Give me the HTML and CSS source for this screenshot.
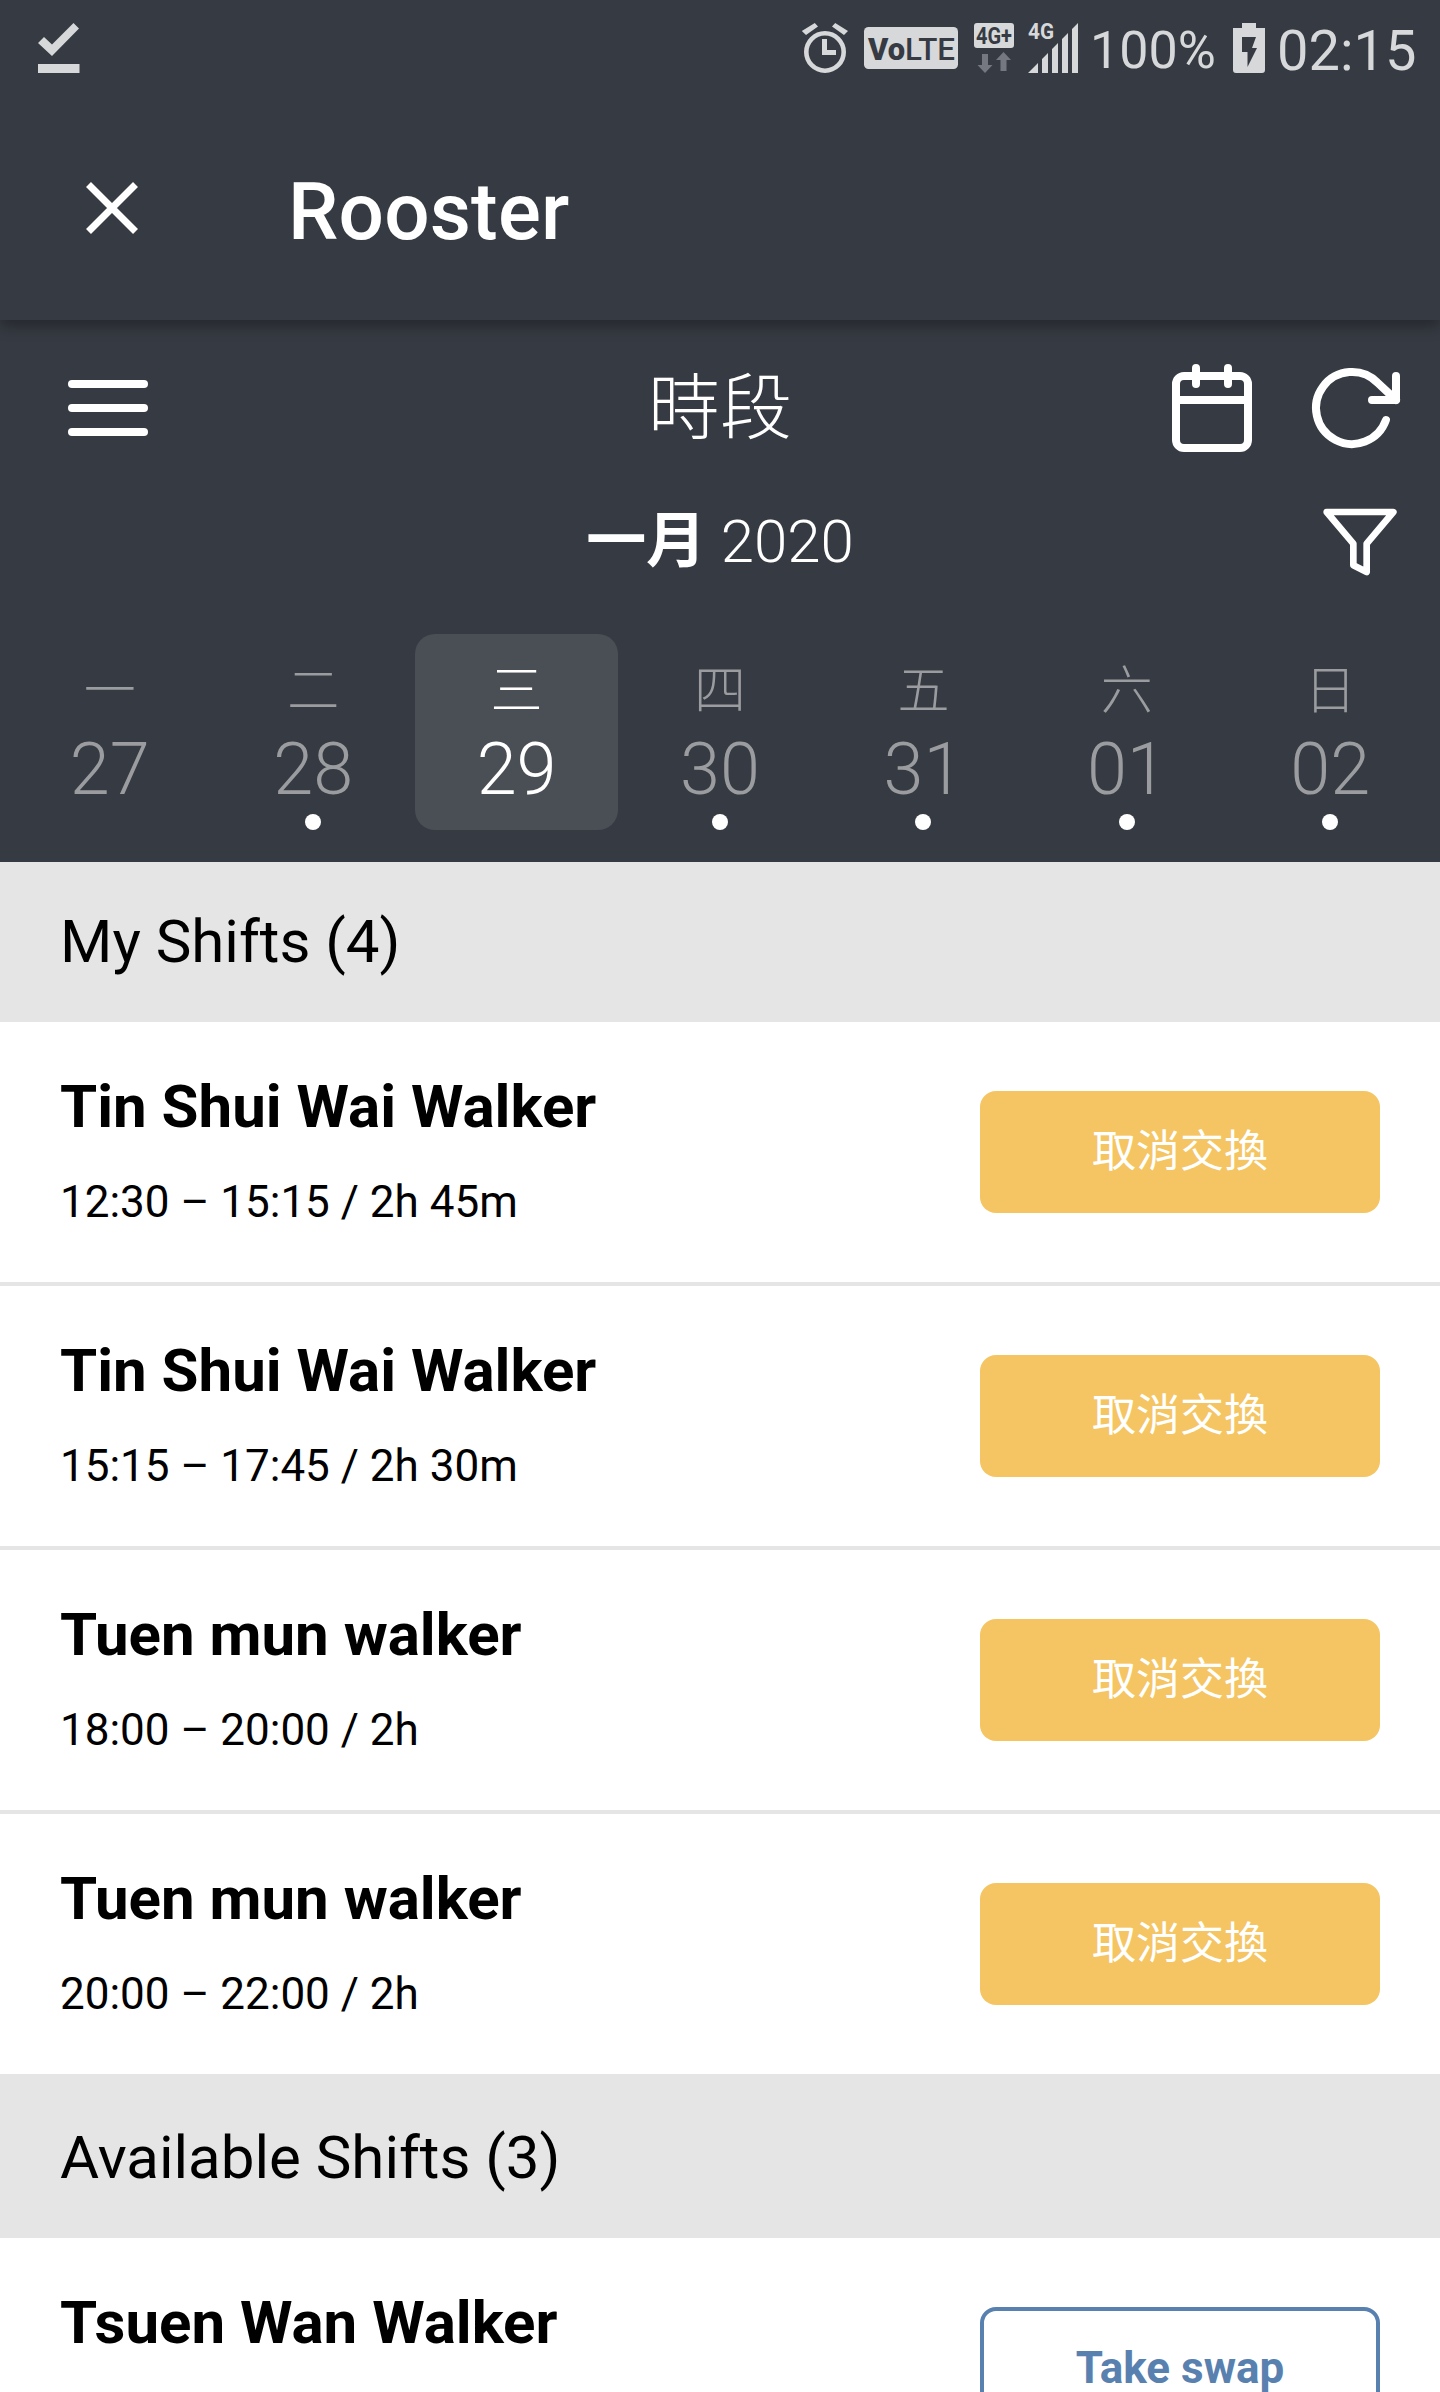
FILE: index.html
```html
<!DOCTYPE html>
<html lang="zh-Hant">
<head>
<meta charset="utf-8">
<title>Rooster</title>
<link rel="stylesheet" href="styles.css">
</head>
<body>
<div class="screen">
  <header class="top">
    <div class="status">
      <svg class="saved" width="42" height="50" viewBox="38 23 42 50"><path d="M38 43l6-6 8 7.500 21.500-21.500 5.500 5.500L52 56z M38 64h41.500v9H38z"/></svg>
      <div class="indicators">
        <svg width="48" height="50" viewBox="801 23 48 50">
          <circle class="ring" cx="825" cy="52" r="18.700"/>
          <path d="M822 39h5v11h9v5h-14z M801.800 31l13-8 3.200 3.500-12 8.500z M848 31l-12.800-8-3.200 3.500 12 8.500z"/>
        </svg>
        <svg class="volte" width="94" height="42" viewBox="864 27 94 42">
          <rect x="864" y="27" width="94" height="42" rx="4.500"/>
          <text class="chip-text heavy" x="868" y="60" textLength="37" lengthAdjust="spacingAndGlyphs" font-size="32">Vo</text>
          <text class="chip-text" x="905" y="60" textLength="50" lengthAdjust="spacingAndGlyphs" font-size="32">LTE</text>
        </svg>
        <svg class="data" width="40" height="50" viewBox="974 23 40 50">
          <rect x="974" y="23" width="40" height="25" rx="3"/>
          <text class="chip-text bold" x="976" y="44" textLength="36" lengthAdjust="spacingAndGlyphs" font-size="23">4G+</text>
          <path class="idle" d="M982 54h6v11h4.500l-7.500 8-7.500-8h4.500z M1000.500 71h6V60h4.500l-7.500-8-7.500 8h4.500z"/>
        </svg>
        <svg class="signal" width="50" height="50" viewBox="1028 23 50 50">
          <text class="bold" x="1028" y="39" textLength="26" lengthAdjust="spacingAndGlyphs" font-size="22">4G</text>
          <path d="M1028 73l10-10v10z M1042 73V59l6-6v20z M1052 73V49l6-6v30z M1062 73V39l6-6v40z M1072 73V29l6-6v50z"/>
        </svg>
        <span class="percent">100%</span>
        <svg class="battery" width="32" height="50" viewBox="1233 23 32 50"><path fill-rule="evenodd" d="M1242 23h14v5h9v42q0 3-3 3h-26q-3 0-3-3V28h9z M1242 37h14l-4 11h5l-9.500 19V52H1242z"/></svg>
        <span class="clock">02:15</span>
      </div>
    </div>
    <div class="appbar">
      <svg class="close" width="52" height="52" viewBox="0 0 52 52"><path d="M2.500 2.500l47 47M49.500 2.500l-47 47"/></svg>
      <h1 class="app-name">Rooster</h1>
    </div>
  </header>

  <section class="planner">
    <div class="toolbar">
      <div class="menu"><i></i><i></i><i></i></div>
      <h2 class="title">時段</h2>
      <div class="tools">
        <svg class="line-icon" width="96" height="96" viewBox="0 0 24 24"><rect x="3" y="4" width="18" height="18" rx="2"/><path d="M16 2v4M8 2v4M3 10h18"/></svg>
        <svg class="line-icon" width="96" height="96" viewBox="0 0 24 24"><path d="M23 4v6h-6"/><path d="M20.490 15a9 9 0 1 1-2.120-9.360L23 10"/></svg>
      </div>
    </div>
    <div class="month-row">
      <div class="month"><b>一月</b> 2020</div>
      <svg class="line-icon" width="80" height="80" viewBox="0 0 24 24"><path d="M22 3H2l8 9.460V19l4 2v-8.540z"/></svg>
    </div>
    <div class="week">
      <div class="day"><span class="weekday">一</span><span class="date">27</span></div>
      <div class="day"><span class="weekday">二</span><span class="date">28</span><i class="dot"></i></div>
      <div class="day selected"><span class="weekday">三</span><span class="date">29</span></div>
      <div class="day"><span class="weekday">四</span><span class="date">30</span><i class="dot"></i></div>
      <div class="day"><span class="weekday">五</span><span class="date">31</span><i class="dot"></i></div>
      <div class="day"><span class="weekday">六</span><span class="date">01</span><i class="dot"></i></div>
      <div class="day"><span class="weekday">日</span><span class="date">02</span><i class="dot"></i></div>
    </div>
  </section>

  <h3 class="group">My Shifts (4)</h3>
  <div class="shift"><div class="info"><div class="place">Tin Shui Wai Walker</div><div class="time">12:30 – 15:15 / 2h 45m</div></div><div class="btn cancel">取消交換</div></div>
  <div class="shift"><div class="info"><div class="place">Tin Shui Wai Walker</div><div class="time">15:15 – 17:45 / 2h 30m</div></div><div class="btn cancel">取消交換</div></div>
  <div class="shift"><div class="info"><div class="place">Tuen mun walker</div><div class="time">18:00 – 20:00 / 2h</div></div><div class="btn cancel">取消交換</div></div>
  <div class="shift"><div class="info"><div class="place">Tuen mun walker</div><div class="time">20:00 – 22:00 / 2h</div></div><div class="btn cancel">取消交換</div></div>
  <h3 class="group">Available Shifts (3)</h3>
  <div class="shift"><div class="info"><div class="place">Tsuen Wan Walker</div></div><div class="btn take">Take swap</div></div>
</div>
</body>
</html>
```

FILE: styles.css
```css
* { box-sizing: border-box; }
body {
  margin: 0;
  font-family: Roboto, "Noto Sans CJK TC", sans-serif;
  color: #000;
  background: #fff;
}
h1, h2, h3 { margin: 0; font-weight: 400; }
svg { display: block; flex: none; overflow: visible; }

.screen {
  width: 1440px;
  height: 2392px;
  overflow: hidden;
}

/* Status bar and app bar */
.top {
  position: relative;
  height: 320px;
  background: #363a42;
  color: #fff;
  box-shadow: 0 6px 14px rgba(0, 0, 0, 0.33);
}
.status {
  display: flex;
  justify-content: space-between;
  height: 100px;
  padding: 23px 0 0 38px;
  color: #d6d8da;
  fill: #d6d8da;
}
.indicators {
  display: flex;
  width: 639px;
  white-space: nowrap;
}
.ring { fill: none; stroke: #d6d8da; stroke-width: 4.6px; }
.volte { margin: 4px 0 0 15px; }
.data { margin-left: 16px; }
.signal { margin-left: 14px; }
.chip-text { fill: #363a42; font-weight: 500; }
.bold { font-weight: 700; }
.heavy { font-weight: 900; }
.idle { fill: #757880; }
.percent {
  width: 143px;
  margin-left: 12px;
  font-size: 52px;
  line-height: 56px;
}
.clock {
  margin-left: 12px;
  font-size: 56px;
  line-height: 56px;
}
.appbar {
  display: flex;
  align-items: flex-start;
  padding: 82px 0 0 86px;
}
.close { stroke: #fff; stroke-width: 7px; }
.app-name {
  margin: -20px 0 0 150px;
  font-size: 80px;
  font-weight: 500;
  letter-spacing: 0.2px;
  line-height: 100px;
}

/* Week planner */
.planner {
  height: 542px;
  padding: 40px 8px 32px;
  background: #363a42;
  color: #fff;
}
.toolbar {
  display: grid;
  grid-template-columns: 1fr auto 1fr;
  align-items: center;
  height: 96px;
}
.menu {
  display: flex;
  flex-direction: column;
  gap: 16px;
  width: 80px;
  margin-left: 60px;
}
.menu i {
  height: 8px;
  border-radius: 4px;
  background: #fff;
}
.title {
  height: 96px;
  font-size: 72px;
  font-weight: 300;
  line-height: 98px;
}
.tools {
  display: flex;
  justify-content: flex-end;
  gap: 44px;
  margin-right: 32px;
}
.line-icon {
  fill: none;
  stroke: #fff;
  stroke-width: 2;
  stroke-linecap: round;
  stroke-linejoin: round;
}
.month-row {
  display: grid;
  grid-template-columns: 80px 1fr 80px;
  height: 80px;
  margin: 46px 32px 52px;
}
.month {
  grid-column: 2;
  text-align: center;
  font-size: 60px;
  font-weight: 300;
  line-height: 80px;
}
.month b { font-weight: 700; }
.week {
  display: grid;
  grid-template-columns: repeat(7, 1fr);
  height: 196px;
}
.day {
  display: flex;
  flex-direction: column;
  align-items: center;
  padding-top: 28px;
  border-radius: 20px;
  color: #9a9c9f;
  font-weight: 300;
}
.selected { background: #4a4e55; color: #fff; }
.weekday { font-size: 52px; line-height: 60px; }
.date { margin-top: 8px; font-size: 72px; line-height: 80px; }
.dot {
  width: 16px;
  height: 16px;
  margin-top: 4px;
  border-radius: 50%;
  background: #fff;
}

/* Shift lists */
.group {
  height: 160px;
  padding: 0 60px;
  background: #e5e5e5;
  font-size: 60px;
  line-height: 159px;
}
.shift {
  display: flex;
  justify-content: space-between;
  height: 264px;
  padding: 0 60px;
  border-bottom: 4px solid #e5e5e5;
}
.place {
  margin-top: 45px;
  font-size: 60px;
  font-weight: 700;
  line-height: 80px;
}
.time {
  margin-top: 25px;
  font-size: 44px;
  line-height: 60px;
}
.btn {
  width: 400px;
  height: 122px;
  margin-top: 69px;
  border-radius: 16px;
  font-size: 44px;
  text-align: center;
}
.cancel {
  background: #f4c562;
  color: #fff;
  line-height: 122px;
}
.take {
  border: 4px solid #5981b0;
  color: #5981b0;
  font-weight: 700;
  line-height: 114px;
}
```
